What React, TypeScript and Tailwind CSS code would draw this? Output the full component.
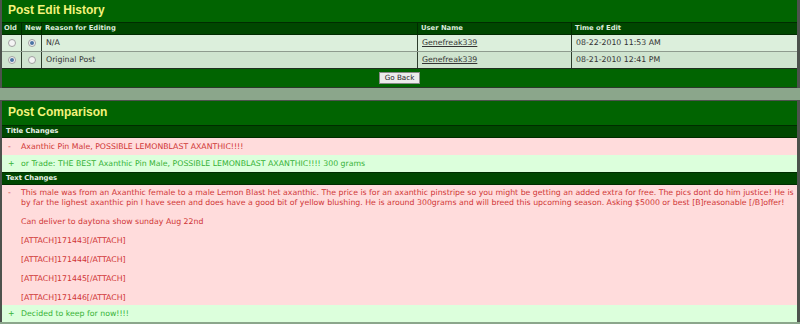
import React from "react";

const cols = "grid grid-cols-[20px_20px_376px_154px_1fr]";

function Radio({ checked }: { checked?: boolean }) {
  return (
    <span className="flex h-[8px] w-[8px] items-center justify-center rounded-full border border-[#a0a0a0] bg-[#f4f4f4]">
      {checked && <span className="h-[4px] w-[4px] rounded-full bg-[#4a73a3]" />}
    </span>
  );
}

const edits = [
  { old: false, neu: true, reason: "N/A", user: "Genefreak339", time: "08-22-2010 11:53 AM", bg: "bg-[#dcefdc]" },
  { old: true, neu: false, reason: "Original Post", user: "Genefreak339", time: "08-21-2010 12:41 PM", bg: "bg-[#cfe4cf]" },
];

function DiffRow({ sign, text, added }: { sign: string; text: string; added?: boolean }) {
  return (
    <div
      className={
        added
          ? "flex h-[17px] items-center bg-[#dcffdc] text-[#37b337]"
          : "flex h-[17px] items-center bg-[#ffdcdc] text-[#d03636]"
      }
    >
      <span className="w-[19px] shrink-0 pl-[6px]">{sign}</span>
      <span>{text}</span>
    </div>
  );
}

export default function App() {
  const body =
    "This male was from an Axanthic female to a male Lemon Blast het axanthic. The price is for an axanthic pinstripe so you might be getting an added extra for free. The pics dont do him justice! He is by far the lighest axanthic pin I have seen and does have a good bit of yellow blushing. He is around 300grams and will breed this upcoming season. Asking $5000 or best [B]reasonable [/B]offer!";

  return (
    <div className="h-[324px] w-[800px] overflow-hidden bg-[#8ba68b] font-['DejaVu_Sans',sans-serif] text-[7.8px] leading-[9.5px]">
      {/* Post Edit History */}
      <div className="border-x-2 border-r-[3px] border-[#4d524d] bg-[#016401]">
        <div className="flex h-[22px] items-center pl-[6px] font-['Liberation_Sans',sans-serif] text-[12px] font-bold text-[#f3f37c]">
          Post Edit History
        </div>
        <div className={`${cols} h-[13px] border-y border-[#002c00] bg-[#004700] text-[6.8px] font-bold text-[#dcebdc]`}>
          <div className="flex items-center border-r border-[#002c00] pl-[2px]">Old</div>
          <div className="flex items-center border-r border-[#002c00] pl-[3px]">New</div>
          <div className="flex items-center border-r border-[#002c00] pl-[3px]">Reason for Editing</div>
          <div className="flex items-center border-r border-[#002c00] pl-[3px]">User Name</div>
          <div className="flex items-center pl-[3px]">Time of Edit</div>
        </div>
        {edits.map((e, i) => (
          <div key={i} className={`${cols} h-[17px] ${e.bg} text-[#333] ${i === 0 ? "border-b border-[#8e9b8e]" : "border-b border-[#1f2f1f]"}`}>
            <div className="flex items-center justify-center border-r border-[#2d3d2d]">
              <Radio checked={e.old} />
            </div>
            <div className="flex items-center justify-center border-r border-[#2d3d2d]">
              <Radio checked={e.neu} />
            </div>
            <div className="flex items-center border-r border-[#2d3d2d] pl-[4px]">{e.reason}</div>
            <div className="flex items-center border-r border-[#2d3d2d] pl-[4px]">
              <span className="underline">{e.user}</span>
            </div>
            <div className="flex items-center pl-[4px]">{e.time}</div>
          </div>
        ))}
        <div className="flex h-[19px] items-center justify-center border-b border-[#2a3a2a]">
          <button className="h-[12px] border border-[#8a8a8a] bg-[#ebebeb] px-[5px] text-[7.2px] leading-[10px] text-[#222]">
            Go Back
          </button>
        </div>
      </div>

      <div className="h-[12px]" />

      {/* Post Comparison */}
      <div className="border-x-2 border-r-[3px] border-t border-[#4d524d] bg-[#016401]">
        <div className="flex h-[24px] items-center pl-[6px] font-['Liberation_Sans',sans-serif] text-[12px] font-bold text-[#f3f37c]">
          Post Comparison
        </div>
        <div className="flex h-[13px] items-center border-y border-[#002c00] bg-[#004700] pl-[4px] text-[6.8px] font-bold text-[#e8f3e8]">
          Title Changes
        </div>
        <DiffRow sign="-" text="Axanthic Pin Male, POSSIBLE LEMONBLAST AXANTHIC!!!!" />
        <DiffRow sign="+" added text="or Trade: THE BEST Axanthic Pin Male, POSSIBLE LEMONBLAST AXANTHIC!!!! 300 grams" />
        <div className="flex h-[13px] items-center border-y border-[#002c00] bg-[#004700] pl-[4px] text-[6.8px] font-bold text-[#e8f3e8]">
          Text Changes
        </div>
        <div className="flex bg-[#ffdcdc] py-[3px] text-[#d03636]">
          <span className="w-[19px] shrink-0 pl-[6px]">-</span>
          <div className="pr-[2px]">
            <p>{body}</p>
            <br />
            <p>Can deliver to daytona show sunday Aug 22nd</p>
            <br />
            <p>[ATTACH]171443[/ATTACH]</p>
            <br />
            <p>[ATTACH]171444[/ATTACH]</p>
            <br />
            <p>[ATTACH]171445[/ATTACH]</p>
            <br />
            <p>[ATTACH]171446[/ATTACH]</p>
          </div>
        </div>
        <DiffRow sign="+" added text="Decided to keep for now!!!!" />
      </div>
    </div>
  );
}
